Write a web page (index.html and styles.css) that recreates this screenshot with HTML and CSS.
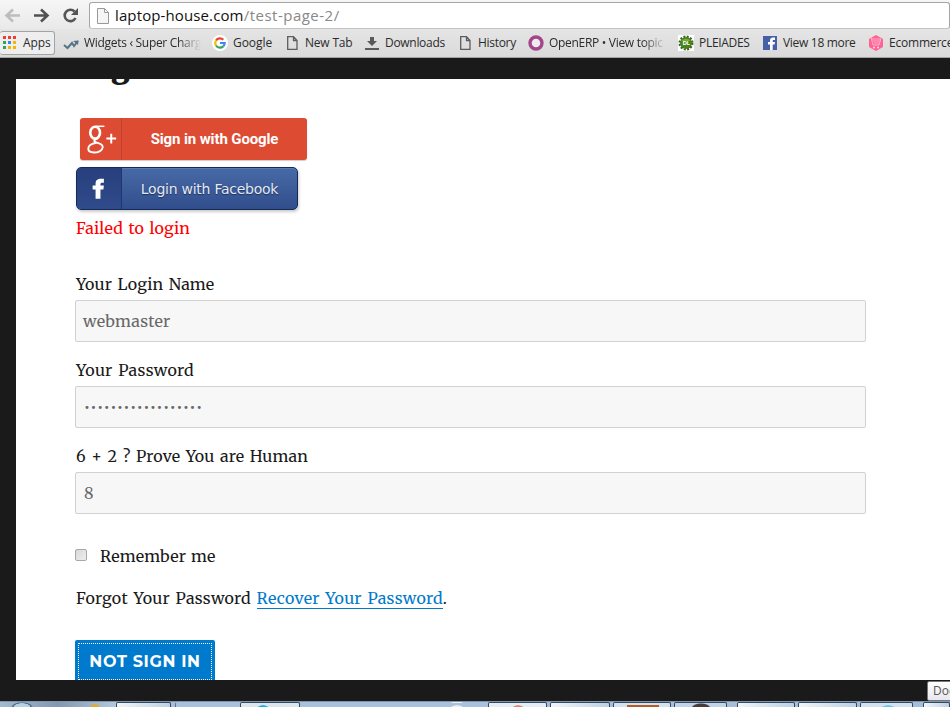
FILE: index.html
```html
<!DOCTYPE html>
<html lang="en">
<head>
<meta charset="utf-8">
<title>Login</title>
<link rel="stylesheet" href="styles.css">
</head>
<body>
<header class="toolbar">
  <svg class="nav" width="88" height="29" viewBox="0 0 88 29" fill="none" stroke-width="2.6">
    <path stroke="#bdbdbd" d="M20 15.500H7M13 9.500L6.500 15.500L13 21.500"/>
    <path stroke="#505050" d="M34 15.500H47M41 9.500L47.500 15.500L41 21.500"/>
    <path stroke="#555" d="M74.500 11.500A5.700 5.700 0 1 0 75.500 18"/>
    <path fill="#555" d="M78 8V15H71Z"/>
  </svg>
  <div class="address">
    <svg width="12" height="16" viewBox="0 0 12 16" fill="#f5f5f5" stroke="#999"><path d="M.5.500H7.500L11.500 4.500V15.500H.5ZM7.500.500V4.500H11.500"/></svg>
    <span class="url">laptop-house.com<span class="path">/test-page-2/</span></span>
  </div>
</header>
<nav class="bookmarks">
  <div class="mark apps"><svg width="14" height="14"><path fill="#f33b32" d="M0 0h3v3H0zM5 0h3v3H5zM10 0h3v3h-3z"/><path fill="#2da65b" d="M0 5h3v3H0zM0 10h3v3H0z"/><path fill="#3589ed" d="M5 5h3v3H5z"/><path fill="#fab300" d="M10 5h3v3h-3zM5 10h3v3H5zM10 10h3v3h-3z"/></svg><span>Apps</span></div>
  <div class="mark widgets"><svg width="16" height="16"><path d="M1 10L4.500 13L9 8L11 11L15 6" fill="none" stroke="#567387" stroke-width="2"/><path d="M10 6L15.500 5.500L15 10Z" fill="#567387"/></svg><span class="fade">Widgets ‹ Super Charg</span></div>
  <div class="mark google"><svg width="16" height="16" fill="none" stroke-width="2.200"><circle cx="8" cy="8" r="8" fill="#fff"/><path stroke="#ea4335" d="M4 5.500A4.700 4.700 0 0 1 11.300 4.700"/><path stroke="#fbbc05" d="M4 5.500A4.700 4.700 0 0 0 4 10.500"/><path stroke="#34a853" d="M4 10.500A4.700 4.700 0 0 0 11.200 11.400"/><path stroke="#4285f4" d="M11.200 11.400A4.700 4.700 0 0 0 12.700 8H8"/></svg><span>Google</span></div>
  <div class="mark page newtab"><svg width="11" height="14" fill="none" stroke="#5c5c5c" stroke-width="1.300"><path d="M.7.700H6.500L10 4.500V13.300H.7ZM6.500.700V4.500H10"/></svg><span>New Tab</span></div>
  <div class="mark downloads"><svg width="14" height="13" fill="#5a5a5a"><path d="M5 0h4v4h3L7 9 2 4h3zM0 11h14v2H0z"/></svg><span>Downloads</span></div>
  <div class="mark page history"><svg width="11" height="14" fill="none" stroke="#5c5c5c" stroke-width="1.300"><path d="M.7.700H6.500L10 4.500V13.300H.7ZM6.500.700V4.500H10"/></svg><span>History</span></div>
  <div class="mark openerp"><svg width="16" height="16"><circle cx="8" cy="8" r="6" fill="#efe9ef" stroke="#a24689" stroke-width="3.400"/></svg><span class="fade">OpenERP • View topic</span></div>
  <div class="mark pleiades"><svg width="16" height="16"><path fill="#fff" d="M0 0h16v16H0z"/><circle cx="8" cy="8" r="6" fill="#48831c"/><circle cx="8" cy="8" r="6.500" fill="none" stroke="#34651c" stroke-width="2" stroke-dasharray="2 1.400"/><path d="M3 6Q8 1 13 6Z" fill="#7bac2d"/><text x="8" y="10" text-anchor="middle" class="badge">DL</text></svg><span>PLEIADES</span></div>
  <div class="mark more"><svg width="14" height="14"><path fill="#4560a7" d="M0 0h14v14H0z"/><path fill="#fff" d="M7 14V8.500H5V6H7V4.500C7 2.600 8.200 1.600 10 1.600H12V4H10.700C9.900 4 9.700 4.300 9.700 5V6H12L11.600 8.500H9.700V14Z"/></svg><span>View 18 more</span></div>
  <div class="mark ecommerce"><svg width="16" height="16"><path fill="#ff6294" d="M8 0L15 4V12L8 16L1 12V4Z"/><path d="M0 2H3L5 10H11L13 4H4M5 6H12M6 8H11" fill="none" stroke="#ffc4d7" stroke-width=".8"/><circle cx="6" cy="12.500" r="1" fill="#ffd9e5"/><circle cx="10" cy="12.500" r="1" fill="#ffd9e5"/></svg><span>Ecommerce</span></div>
</nav>
<main class="viewport">
  <div class="sheet">
    <h1 class="heading">Login</h1>
    <div class="gbtn">
      <svg width="42" height="42" viewBox="0 0 42 42" fill="none" stroke="#fff"><ellipse cx="15.500" cy="14.500" rx="5" ry="6" stroke-width="2.700"/><path d="M16 8H25" stroke-width="1.500"/><path d="M18.500 20C13 22 14 24 18 25C23 26.300 24.500 28.500 22.500 31.500C19.500 36 8.500 36 8.500 31C8.500 27 13 25.500 17 25" stroke-width="2"/><path d="M27 20.500H37M32 15.500V25.500" stroke-width="2"/></svg>
      <span>Sign in with Google</span>
    </div>
    <div class="fbtn">
      <svg width="45" height="41" viewBox="0 0 45 41"><path fill="#fff" d="M19 31V21.500H16V17.500H19V15.500C19 12 21 10.500 24.500 10.500H27.500V14.500H25.700C24.400 14.500 24 15 24 16.200V17.500H27.500L27 21.500H24V31Z"/></svg>
      <span>Login with Facebook</span>
    </div>
    <p class="line error"><span>Failed to login</span></p>
    <label class="line name"><span>Your Login Name</span></label>
    <div class="field user"><span>webmaster</span></div>
    <label class="line pass"><span>Your Password</span></label>
    <div class="field dots"><span>••••••••••••••••••</span></div>
    <label class="line human"><span>6 + 2 ? Prove You are Human</span></label>
    <div class="field"><span>8</span></div>
    <div class="line remember"><i class="check"></i><span>Remember me</span></div>
    <p class="line forgot"><span>Forgot Your Password <a>Recover Your Password</a>.</span></p>
    <div class="submit"><span>NOT SIGN IN</span></div>
  </div>
</main>
<footer class="taskbar">
  <i class="orb"></i><i class="task t1"></i><i class="task t2"></i><i class="task t3"></i><i class="task t4"></i><i class="task t5"></i><i class="task t6"></i><i class="task t7"></i><i class="task t8"></i><i class="task t9"></i><i class="task t10"></i><i class="task t11"></i><i class="task t12"></i>
</footer>
<div class="tip">Doc</div>
</body>
</html>
```
FILE: styles.css
```css
* { box-sizing: border-box; }
body { margin: 0; width: 950px; height: 707px; overflow: hidden; position: relative; background: #1a1a1a; display: flex; flex-direction: column; font-family: "Open Sans", "Noto Sans", sans-serif; }
svg { display: block; flex: none; }
.toolbar { height: 29px; display: flex; background: linear-gradient(#f6f6f6, #e9e9e9); flex: none; }
.address { margin: 2px 0 0 1px; width: 870px; height: 27px; border: 1px solid #a5a5a5; border-bottom-color: #c4c4c4; border-radius: 3px; background: #fff; display: flex; align-items: center; padding: 0 0 0 7px; }
.url { margin: -2px 0 0 6px; font-size: 15px; letter-spacing: .12px; color: #111; white-space: nowrap; }
.path { color: #888; letter-spacing: .5px; }
.bookmarks { height: 29px; flex: none; display: grid; grid-template-columns: 59px 149px 76px 78px 94px 69px 149px 83px 106px 100px; background: linear-gradient(#e5e5e5, #dadada); border-bottom: 1px solid #a2a2a2; font-size: 12px; letter-spacing: -.2px; color: #2b2b2b; }
.mark { display: flex; align-items: center; white-space: nowrap; padding-left: 4px; gap: 5px; }
.mark span { margin-top: -1px; }
.mark.apps { width: 55px; height: 24px; margin-top: 2px; border: 1px solid #a3a3a3; border-left: 0; border-radius: 3px; background: #eee; padding-left: 3px; gap: 6px; letter-spacing: -.1px; }
.google { letter-spacing: -.05px; }
.page { padding-left: 3px; gap: 7px; }
.downloads { padding-left: 3px; gap: 6px; letter-spacing: -.3px; }
.history { padding-left: 4px; letter-spacing: -.3px; }
.widgets { letter-spacing: -.3px; }
.openerp { padding-left: 3px; letter-spacing: -.3px; }
.pleiades, .more { letter-spacing: -.3px; }
.more { padding-left: 6px; gap: 6px; }
.ecommerce { padding-left: 5px; }
.fade { width: 117px; overflow: hidden; -webkit-mask-image: linear-gradient(90deg, #000 80%, transparent); mask-image: linear-gradient(90deg, #000 80%, transparent); }
.badge { font: bold 6px "Open Sans", sans-serif; fill: #fff; }
.viewport { margin: 21px 0 0 16px; height: 601px; flex: none; overflow: hidden; background: #fff; }
.sheet { margin-left: 59px; width: 791px; font-family: Merriweather, "DejaVu Serif Condensed", "DejaVu Serif", serif; color: #1a1a1a; }
.heading { margin: -31px 0 0; height: 38px; font: 900 30px/38px Merriweather, "DejaVu Serif", serif; letter-spacing: -1px; }
.gbtn { margin: 32px 0 0 5px; width: 227px; height: 42px; display: flex; align-items: center; border-radius: 3px; background: #de4b33; box-shadow: 0 1px 1px #ccc; color: #fff; font: bold 15px Roboto, sans-serif; letter-spacing: -.12px; }
.gbtn svg { border-right: 1px solid #bf4332; }
.gbtn span { flex: 1; text-align: center; }
.fbtn { margin: 7px 0 0 1px; width: 222px; height: 43px; display: flex; align-items: center; border: 1px solid #142b59; border-radius: 5px; background: linear-gradient(#4869a7, #314e8c); box-shadow: 1px 2px 3px #ccc, inset 0 1px #597bb7; color: #e3e9f5; font: 14px "DejaVu Sans", sans-serif; overflow: hidden; }
.fbtn svg { background: linear-gradient(#273f7c, #304b8b); border-right: 1px solid #1e386e; }
.fbtn span { flex: 1; text-align: center; text-shadow: 0 1px 1px #1c315d; white-space: nowrap; letter-spacing: -.25px; padding-top: 1px; }
.line { display: flex; align-items: center; height: 28px; margin: 14px 0 2px; padding-left: 1px; font-size: 16px; letter-spacing: .15px; word-spacing: 1.5px; white-space: nowrap; }
.error { margin: 4px 0 28px; color: #f00; }
.name { margin-top: 0; }
.pass { letter-spacing: .3px; }
.field { height: 42px; border: 1px solid #d1d1d1; border-radius: 2px; background: #f7f7f7; color: #686868; display: flex; align-items: center; padding-left: 8px; font-size: 16px; letter-spacing: .25px; }
.user { padding-left: 7px; }
.dots { font: 10px "DejaVu Sans", sans-serif; letter-spacing: .7px; }
.remember { margin: 28px 0 0; padding-left: 0; gap: 13px; word-spacing: 1px; }
.check { width: 12px; height: 12px; border: 1px solid #a8a8a8; border-radius: 2px; background: linear-gradient(135deg, #d9d9d9, #eee); margin-top: -2px; }
.forgot { margin: 14px 0 0; letter-spacing: .25px; word-spacing: 1.6px; }
.forgot a { color: #007acc; border-bottom: 1px solid #007acc; }
.submit { margin-top: 28px; width: 140px; height: 43px; border-radius: 2px; background: #007acc; color: #fff; display: flex; justify-content: center; align-items: center; font: 700 16px Montserrat, "Open Sans", sans-serif; letter-spacing: .65px; outline: 1px dotted #fff; outline-offset: -4px; }
.taskbar { margin-top: 21px; height: 6px; flex: none; display: grid; grid-template-columns: 116px 55px 69px 60px 188px 62px 63px 61px 63px 61px 62px 63px 27px; background: #a5bedb; border-top: 1px solid #8094aa; overflow: hidden; }
.orb { background: radial-gradient(ellipse 11px 5px at 22px 5px, #b5d1e2 70%, #3c6586 80%, transparent), radial-gradient(ellipse 5px 3px at 95px 5px, #e2ac26 80%, transparent), linear-gradient(90deg, #a4bad2, #8297b2 50%, #b1c9df); }
.task { border: solid #34495f; border-width: 1px 1px 0; border-radius: 2px 2px 0 0; background: linear-gradient(100deg, #f1f5f9, #bdd0e4); }
.t5, .t6, .t7, .t9, .t10 { margin-right: 3px; }
.t8, .t11 { margin-right: 10px; }
.t2, .t4 { border-color: transparent; background: #a7c1df; }
.t2 { border-left-color: #60758d; margin-left: 4px; }
.t3 { background: radial-gradient(ellipse 6px 3px at 22px 5px, #14b2e7 80%, transparent), #dbe5ef; }
.t4 { background: radial-gradient(ellipse 7px 3px at 156px 5px, #eee 80%, transparent), #a7c1df; }
.t5 { background: radial-gradient(ellipse 6px 3px at 29px 5px, #e28577 80%, transparent), #e7edf4; }
.t7 { background: linear-gradient(90deg, transparent 13px, #b85c26 13px 45px, transparent 45px) 0 2px no-repeat, #d4e1ee; }
.t8 { background: radial-gradient(ellipse 10px 5px at 26px 5px, #493b3a 80%, transparent), #c2d5e8; }
.t11 { background: radial-gradient(ellipse 7px 3px at 27px 5px, #6ac6ee 80%, transparent), #d4e1ee; }
.tip { position: absolute; left: 927px; top: 681px; width: 40px; height: 20px; padding-left: 5px; border: 1px solid #777; border-radius: 2px; background: linear-gradient(#fff, #e6e7f0); color: #555; font-size: 12px; line-height: 18px; }
```
